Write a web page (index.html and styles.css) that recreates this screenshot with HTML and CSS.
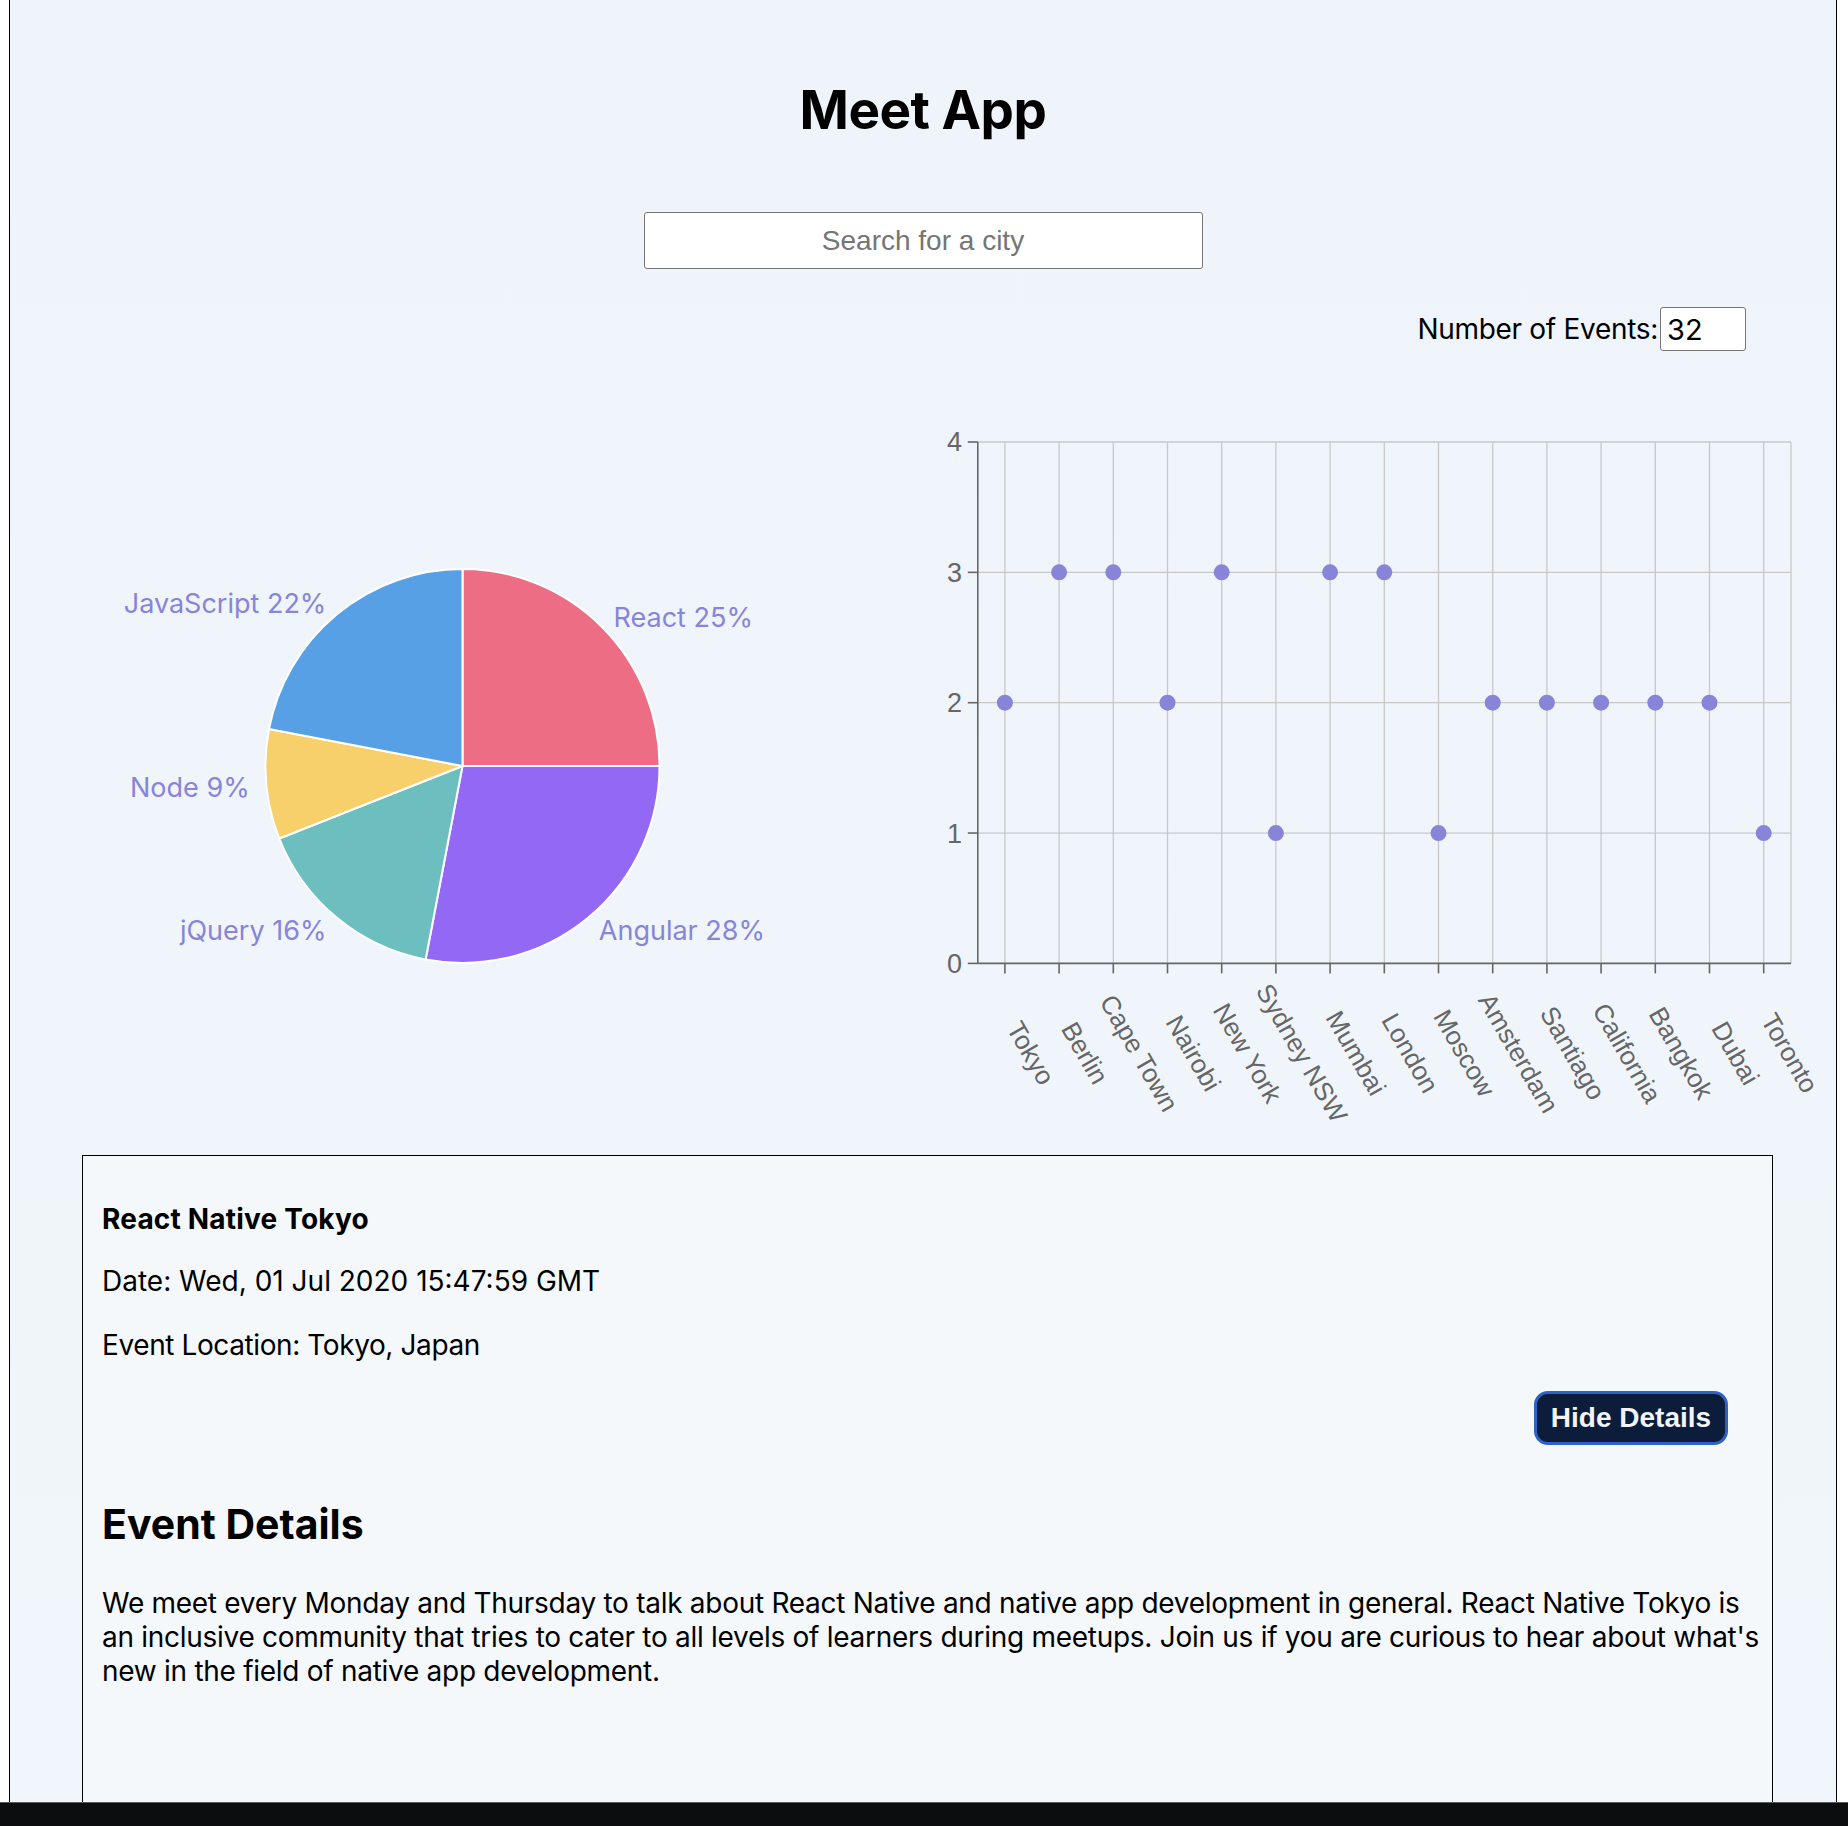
FILE: index.html
```html
<!DOCTYPE html>
<html lang="en">
<head>
<meta charset="utf-8">
<title>Meet App</title>
<link rel="stylesheet" href="styles.css">
</head>
<body>
<div class="app">
  <h1 class="title">Meet App</h1>
  <div class="city-search">
    <input class="city" type="text" placeholder="Search for a city">
  </div>
  <div class="events-count">
    <label class="count-label" for="num">Number of Events:</label>
    <input id="num" class="count-input" type="text" value="32">
  </div>
  <div class="charts">
    <svg class="pie" width="891" height="750" viewBox="0 0 891 750">
      <g stroke="#ffffff" stroke-width="2" stroke-linejoin="round">
        <path fill="#ED6D85" d="M452.5 386 L452.5 189 A197 197 0 0 1 649.5 386 Z"/>
        <path fill="#9268F5" d="M452.5 386 L649.5 386 A197 197 0 0 1 415.6 579.5 Z"/>
        <path fill="#6CBEBF" d="M452.5 386 L415.6 579.5 A197 197 0 0 1 269.3 458.5 Z"/>
        <path fill="#F7CF6B" d="M452.5 386 L269.3 458.5 A197 197 0 0 1 259 349.1 Z"/>
        <path fill="#57A0E5" d="M452.5 386 L259 349.1 A197 197 0 0 1 452.5 189 Z"/>
      </g>
      <g class="pie-label">
        <text x="603.5" y="247" text-anchor="start">React 25%</text>
        <text x="588.8" y="560" text-anchor="start">Angular 28%</text>
        <text x="316.4" y="560" text-anchor="end">jQuery 16%</text>
        <text x="239.7" y="417" text-anchor="end">Node 9%</text>
        <text x="316.4" y="233" text-anchor="end">JavaScript 22%</text>
      </g>
    </svg>
    <svg class="scatter" width="936" height="750" viewBox="0 0 936 750">
      <g stroke="#c8c8c8" stroke-width="1.3" fill="none">
        <line x1="76.8" y1="62" x2="890" y2="62"/>
        <line x1="76.8" y1="192.35" x2="890" y2="192.35"/>
        <line x1="76.8" y1="322.7" x2="890" y2="322.7"/>
        <line x1="76.8" y1="453.05" x2="890" y2="453.05"/>
        <line x1="103.9" y1="62" x2="103.9" y2="583.4"/>
        <line x1="158.1" y1="62" x2="158.1" y2="583.4"/>
        <line x1="212.3" y1="62" x2="212.3" y2="583.4"/>
        <line x1="266.5" y1="62" x2="266.5" y2="583.4"/>
        <line x1="320.7" y1="62" x2="320.7" y2="583.4"/>
        <line x1="374.9" y1="62" x2="374.9" y2="583.4"/>
        <line x1="429.1" y1="62" x2="429.1" y2="583.4"/>
        <line x1="483.3" y1="62" x2="483.3" y2="583.4"/>
        <line x1="537.5" y1="62" x2="537.5" y2="583.4"/>
        <line x1="591.7" y1="62" x2="591.7" y2="583.4"/>
        <line x1="645.9" y1="62" x2="645.9" y2="583.4"/>
        <line x1="700.1" y1="62" x2="700.1" y2="583.4"/>
        <line x1="754.3" y1="62" x2="754.3" y2="583.4"/>
        <line x1="808.5" y1="62" x2="808.5" y2="583.4"/>
        <line x1="862.7" y1="62" x2="862.7" y2="583.4"/>
        <line x1="890" y1="62" x2="890" y2="583.4"/>
      </g>
      <g stroke="#666666" stroke-width="1.6" fill="none">
        <line x1="76.8" y1="62" x2="76.8" y2="583.4"/>
        <line x1="76.8" y1="583.4" x2="890" y2="583.4"/>
        <line x1="66.8" y1="62" x2="76.8" y2="62"/>
        <line x1="66.8" y1="192.35" x2="76.8" y2="192.35"/>
        <line x1="66.8" y1="322.7" x2="76.8" y2="322.7"/>
        <line x1="66.8" y1="453.05" x2="76.8" y2="453.05"/>
        <line x1="66.8" y1="583.4" x2="76.8" y2="583.4"/>
        <line x1="103.9" y1="583.4" x2="103.9" y2="593.4"/>
        <line x1="158.1" y1="583.4" x2="158.1" y2="593.4"/>
        <line x1="212.3" y1="583.4" x2="212.3" y2="593.4"/>
        <line x1="266.5" y1="583.4" x2="266.5" y2="593.4"/>
        <line x1="320.7" y1="583.4" x2="320.7" y2="593.4"/>
        <line x1="374.9" y1="583.4" x2="374.9" y2="593.4"/>
        <line x1="429.1" y1="583.4" x2="429.1" y2="593.4"/>
        <line x1="483.3" y1="583.4" x2="483.3" y2="593.4"/>
        <line x1="537.5" y1="583.4" x2="537.5" y2="593.4"/>
        <line x1="591.7" y1="583.4" x2="591.7" y2="593.4"/>
        <line x1="645.9" y1="583.4" x2="645.9" y2="593.4"/>
        <line x1="700.1" y1="583.4" x2="700.1" y2="593.4"/>
        <line x1="754.3" y1="583.4" x2="754.3" y2="593.4"/>
        <line x1="808.5" y1="583.4" x2="808.5" y2="593.4"/>
        <line x1="862.7" y1="583.4" x2="862.7" y2="593.4"/>
      </g>
      <g class="axis-label y-label" text-anchor="end">
        <text x="61" y="62" dy="0.35em">4</text>
        <text x="61" y="192.35" dy="0.35em">3</text>
        <text x="61" y="322.7" dy="0.35em">2</text>
        <text x="61" y="453.05" dy="0.35em">1</text>
        <text x="61" y="583.4" dy="0.35em">0</text>
      </g>
      <g class="axis-label" text-anchor="middle">
        <text transform="translate(129.9 673) rotate(60)" dy="0.35em">Tokyo</text>
        <text transform="translate(184.1 673) rotate(60)" dy="0.35em">Berlin</text>
        <text transform="translate(238.3 673) rotate(60)" dy="0.35em">Cape Town</text>
        <text transform="translate(292.5 673) rotate(60)" dy="0.35em">Nairobi</text>
        <text transform="translate(346.7 673) rotate(60)" dy="0.35em">New York</text>
        <text transform="translate(400.9 673) rotate(60)" dy="0.35em">Sydney NSW</text>
        <text transform="translate(455.1 673) rotate(60)" dy="0.35em">Mumbai</text>
        <text transform="translate(509.3 673) rotate(60)" dy="0.35em">London</text>
        <text transform="translate(563.5 673) rotate(60)" dy="0.35em">Moscow</text>
        <text transform="translate(617.7 673) rotate(60)" dy="0.35em">Amsterdam</text>
        <text transform="translate(671.9 673) rotate(60)" dy="0.35em">Santiago</text>
        <text transform="translate(726.1 673) rotate(60)" dy="0.35em">California</text>
        <text transform="translate(780.3 673) rotate(60)" dy="0.35em">Bangkok</text>
        <text transform="translate(834.5 673) rotate(60)" dy="0.35em">Dubai</text>
        <text transform="translate(888.7 673) rotate(60)" dy="0.35em">Toronto</text>
      </g>
      <g fill="#8884d8">
        <circle cx="103.9" cy="322.7" r="8"/>
        <circle cx="158.1" cy="192.35" r="8"/>
        <circle cx="212.3" cy="192.35" r="8"/>
        <circle cx="266.5" cy="322.7" r="8"/>
        <circle cx="320.7" cy="192.35" r="8"/>
        <circle cx="374.9" cy="453.05" r="8"/>
        <circle cx="429.1" cy="192.35" r="8"/>
        <circle cx="483.3" cy="192.35" r="8"/>
        <circle cx="537.5" cy="453.05" r="8"/>
        <circle cx="591.7" cy="322.7" r="8"/>
        <circle cx="645.9" cy="322.7" r="8"/>
        <circle cx="700.1" cy="322.7" r="8"/>
        <circle cx="754.3" cy="322.7" r="8"/>
        <circle cx="808.5" cy="322.7" r="8"/>
        <circle cx="862.7" cy="453.05" r="8"/>
      </g>
    </svg>
  </div>
  <div class="event">
    <h2 class="event-title">React Native Tokyo</h2>
    <p class="event-line event-date">Date: Wed, 01 Jul 2020 15:47:59 GMT</p>
    <p class="event-line event-location">Event Location: Tokyo, Japan</p>
    <div class="btn-row">
      <button class="details-btn" type="button">Hide Details</button>
    </div>
    <h2 class="details-heading">Event Details</h2>
    <p class="description">We meet every Monday and Thursday to talk about React Native and native app development in general. React Native Tokyo is an inclusive community that tries to cater to all levels of learners during meetups. Join us if you are curious to hear about what's new in the field of native app development.</p>
  </div>
</div>
<div class="taskbar"></div>
</body>
</html>
```

FILE: styles.css
```css
html, body {
  margin: 0;
  padding: 0;
  background: #ffffff;
}

body {
  font-family: Inter, "Noto Sans", sans-serif;
  color: #000000;
  overflow: hidden;
}

.app {
  margin-left: 9px;
  width: 1826px;
  min-height: 1900px;
  border-left: 1px solid #000000;
  border-right: 1px solid #000000;
  background: linear-gradient(180deg, #eef4fa 0%, #f1f6fb 100%);
  display: flex;
  flex-direction: column;
}

.title {
  margin: 78px 0 0 0;
  font-size: 53px;
  line-height: 64px;
  font-weight: 700;
  text-align: center;
  letter-spacing: -0.5px;
}

.city-search {
  margin-top: 70px;
  display: flex;
  justify-content: center;
}

.city {
  box-sizing: border-box;
  width: 559px;
  height: 57px;
  border: 1px solid #767676;
  border-radius: 3px;
  background: #ffffff;
  font-family: "Liberation Sans", Arial, sans-serif;
  font-size: 28px;
  text-align: center;
  color: #000000;
  padding: 0;
  outline: none;
}

.city::placeholder {
  color: #757575;
}

.events-count {
  margin-top: 38px;
  display: flex;
  justify-content: flex-end;
  align-items: center;
  padding-right: 90px;
  gap: 2px;
}

.count-label {
  font-size: 28px;
  line-height: 34px;
  letter-spacing: -0.3px;
}

.count-input {
  box-sizing: border-box;
  width: 86px;
  height: 44px;
  border: 1px solid #767676;
  border-radius: 3px;
  background: #ffffff;
  font-family: Inter, "Noto Sans", sans-serif;
  font-size: 29px;
  padding: 0 0 0 6px;
  color: #000000;
  outline: none;
}

.charts {
  margin-top: 29px;
  height: 750px;
  display: flex;
}

.pie, .scatter {
  display: block;
  flex: none;
}

.pie-label text {
  font-family: Inter, "Noto Sans", sans-serif;
  font-size: 27px;
  fill: #8884d8;
}

.axis-label text {
  font-family: "Liberation Sans", Arial, sans-serif;
  font-size: 26px;
  fill: #666666;
}

.y-label text {
  font-size: 27px;
}

.event {
  box-sizing: border-box;
  margin: 25px 0 0 72px;
  width: 1691px;
  min-height: 720px;
  border: 1px solid #000000;
  background: #f4f8fb;
  padding: 46px 5px 0 19px;
}

.event-title {
  margin: 0;
  font-size: 28px;
  line-height: 34px;
  font-weight: 700;
  letter-spacing: 0.2px;
}

.event-line {
  margin: 0;
  font-size: 28px;
  line-height: 34px;
}

.event-date {
  margin-top: 28px;
}

.event-location {
  margin-top: 30px;
  letter-spacing: -0.4px;
}

.btn-row {
  margin-top: 29px;
  display: flex;
  justify-content: flex-end;
  padding-right: 39px;
}

.details-btn {
  box-sizing: border-box;
  width: 194px;
  height: 54px;
  border: 3px solid #2f62c2;
  border-radius: 14px;
  background: #0b1d3a;
  color: #f2f4f8;
  font-family: "Liberation Sans", Arial, sans-serif;
  font-size: 28px;
  font-weight: 700;
  padding: 0;
}

.details-heading {
  margin: 54px 0 0 0;
  font-size: 41px;
  line-height: 50px;
  font-weight: 700;
}

.description {
  margin: 37px 0 0 0;
  font-size: 28px;
  line-height: 34px;
  letter-spacing: -0.28px;
}

.taskbar {
  position: fixed;
  left: 0;
  right: 0;
  bottom: 0;
  height: 23px;
  background: #0c0d0f;
  border-top: 1px solid #5a5a5a;
}
```
